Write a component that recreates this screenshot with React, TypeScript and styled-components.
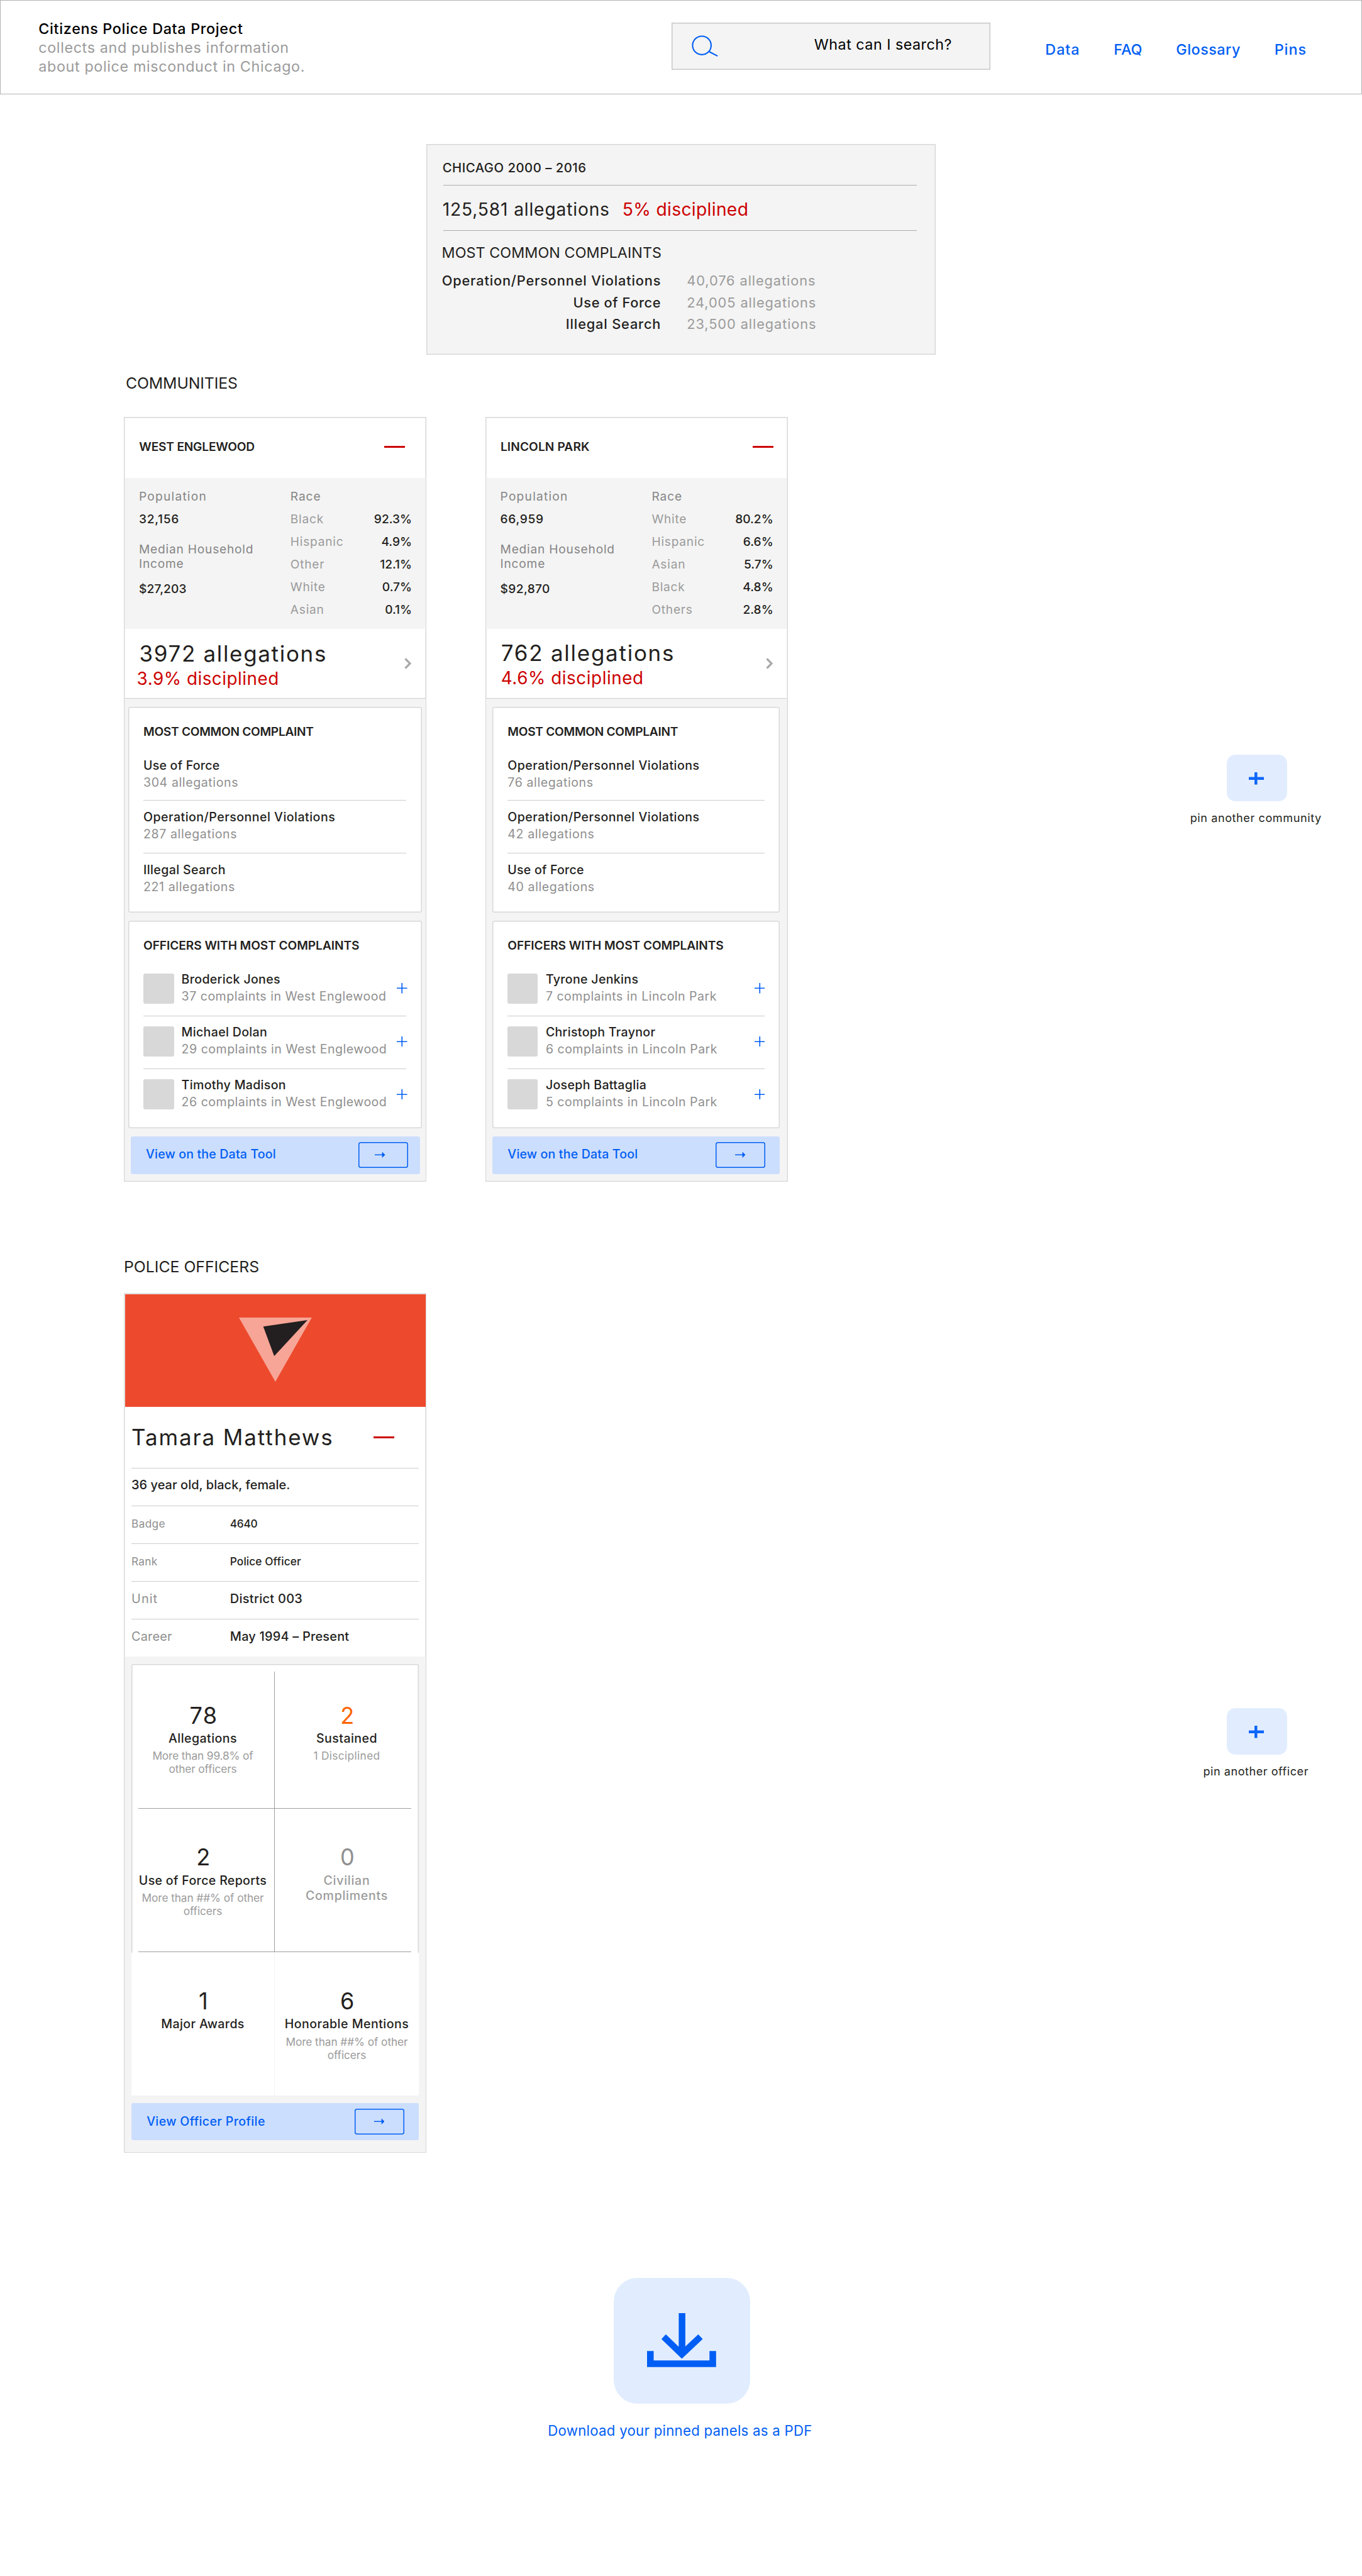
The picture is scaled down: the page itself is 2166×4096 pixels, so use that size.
import React from "react";
import styled, { createGlobalStyle, css } from "styled-components";

/* The layout is specified on a 2880-wide artboard and drawn at this ratio. */
const RATIO = 0.7521;
const u = (n: number) => `${+(n * RATIO).toFixed(3)}px`;

const ink = "#231f20";
const blue = "#005ef4";
const red = "#cc0000";
const grey = "#8f8f8f";
const softGrey = "#9b9b9b";
const line = "#d8d8d8";
const hairline = "#cdcdcd";
const wash = "#f4f4f4";

const GlobalStyle = createGlobalStyle`
  html, body { margin: 0; padding: 0; background: #ffffff; }
  * { box-sizing: border-box; }
  body {
    font-family: Inter, "Liberation Sans", sans-serif;
    color: ${ink};
    -webkit-font-smoothing: antialiased;
  }
`;

type TypeProps = {
  $size: number;
  $lead: number;
  $weight?: number;
  $track?: number;
  $tone?: string;
};

const type = css<TypeProps>`
  font-size: ${(p) => u(p.$size)};
  line-height: ${(p) => u(p.$lead)};
  font-weight: ${(p) => p.$weight ?? 400};
  letter-spacing: ${(p) => u(p.$track ?? 0)};
  color: ${(p) => p.$tone ?? ink};
  white-space: nowrap;
`;

const Text = styled.div<TypeProps>`
  ${type}
`;

/* ---------- page frame ---------- */

const Page = styled.div`
  width: ${u(2880)};
  height: 4096px;
  overflow: hidden;
  display: flex;
  flex-direction: column;
`;

const Header = styled.header`
  flex: none;
  height: ${u(200)};
  display: flex;
  align-items: flex-start;
  box-shadow: inset 0 0 0 1px #b3b3b3;
`;

const Brand = styled.div`
  width: ${u(1420)};
  padding: ${u(40.7)} 0 0 ${u(81.5)};
`;

const Search = styled.div`
  width: ${u(674)};
  height: ${u(100)};
  margin-top: ${u(48)};
  display: flex;
  align-items: center;
  justify-content: space-between;
  padding: 0 ${u(81)} 0 ${u(42)};
  background: ${wash};
  box-shadow: inset 0 0 0 ${u(2)} #c8c8c8;
`;

const SearchText = styled(Text)`
  padding-bottom: ${u(6.6)};
`;

const SearchIcon = styled.svg`
  width: ${u(56)};
  height: ${u(46)};
`;

const Nav = styled.nav`
  display: flex;
  gap: ${u(71.5)};
  margin: ${u(84.7)} 0 0 ${u(116.3)};
`;

const NavLink = styled.a<TypeProps>`
  ${type}
  text-decoration: none;
`;

/* ---------- city summary ---------- */

const Summary = styled.section`
  flex: none;
  align-self: center;
  width: ${u(1076)};
  height: ${u(446)};
  margin-top: ${u(104)};
  padding: ${u(33.2)} ${u(39)} 0 ${u(33.7)};
  background: ${wash};
  box-shadow: inset 0 0 0 ${u(2)} ${line};
`;

const SummaryRule = styled.div<{ $above: number }>`
  height: ${u(2)};
  margin: ${(p) => u(p.$above)} 0 0 ${u(1.3)};
  border-top: 1px solid #adadad;
`;

const SummaryTotals = styled.div`
  display: flex;
  gap: ${u(26.4)};
  margin: ${u(25.4)} 0 0;
`;

const SummaryHeading = styled(Text)`
  margin: ${u(25.7)} 0 0 ${u(-1.6)};
`;

const SummaryGrid = styled.div`
  display: grid;
  grid-template-columns: ${u(463)} auto;
  column-gap: ${u(54.6)};
  margin: ${u(15.7)} 0 0 ${u(-1)};
`;

const SummaryName = styled(Text)`
  justify-self: end;
`;

/* ---------- sections ---------- */

const SectionTitle = styled.h2<TypeProps & { $above: number; $below: number; $left: number }>`
  ${type}
  margin: ${(p) => u(p.$above)} 0 ${(p) => u(p.$below)} ${(p) => u(p.$left)};
`;

const Shelf = styled.section`
  flex: none;
  display: flex;
  align-items: flex-start;
  gap: ${u(124)};
  padding: 0 ${u(84.5)} 0 ${u(262)};
`;

const Card = styled.article<{ $height: number }>`
  flex: none;
  width: ${u(640)};
  height: ${(p) => u(p.$height)};
  padding: ${u(2)};
  display: flex;
  flex-direction: column;
  box-shadow: inset 0 0 0 ${u(2)} ${line};
`;

const PinColumn = styled.div<{ $drop: number }>`
  width: ${u(280)};
  margin: ${(p) => u(p.$drop)} 0 0 auto;
  display: flex;
  flex-direction: column;
  align-items: center;
`;

const PinButton = styled.button`
  width: ${u(128)};
  height: ${u(98)};
  margin-left: ${u(5)};
  padding: ${u(2)} ${u(2)} 0 0;
  border: 0;
  border-radius: ${u(18)};
  background: #e1edfe;
  display: flex;
  align-items: center;
  justify-content: center;
`;

const PinText = styled(Text)`
  margin-top: ${u(20)};
`;

/* ---------- community card ---------- */

const CardHead = styled.div<{ $right: number }>`
  height: ${u(126)};
  padding: 0 ${(p) => u(p.$right - 2)} ${u(5)} ${u(30.3)};
  display: flex;
  align-items: center;
  justify-content: space-between;
`;

const Minus = styled.div`
  width: ${u(44)};
  height: 3px;
  background: ${red};
`;

const Facts = styled.div`
  height: ${u(320)};
  padding: ${u(14.7)} ${u(29)} 0 ${u(29.8)};
  display: flex;
  justify-content: space-between;
  background: ${wash};
`;

const IncomeLabel = styled(Text)`
  margin: ${u(25.3)} 0 ${u(11.7)};
`;

const RaceList = styled.div`
  width: ${u(257)};
`;

const RaceRow = styled.div`
  display: flex;
  justify-content: space-between;
`;

const Totals = styled.div`
  height: ${u(146.7)};
  display: flex;
  align-items: center;
  justify-content: space-between;
  padding: 0 ${u(30)} 0 0;
  border-bottom: 1px solid ${hairline};
`;

const TotalsText = styled.div<{ $top: number; $left: number }>`
  align-self: flex-start;
  padding: ${(p) => u(p.$top)} 0 0 ${(p) => u(p.$left)};
`;

const Rate = styled(Text)<{ $outdent: number }>`
  margin: ${u(3.5)} 0 0 ${(p) => u(-p.$outdent)};
`;

const Chevron = styled.svg`
  width: ${u(15)};
  height: ${u(24)};
`;

const Lower = styled.div<{ $left: number; $right: number }>`
  flex: 1;
  padding: ${u(18)} ${(p) => u(p.$right)} 0 ${(p) => u(p.$left)};
  background: ${wash};
`;

const Panel = styled.div<{ $height: number; $below: number; $top: number }>`
  height: ${(p) => u(p.$height)};
  margin-bottom: ${(p) => u(p.$below)};
  padding: ${(p) => u(p.$top)} ${u(32.5)} 0;
  border-radius: ${u(4)};
  background: #ffffff;
  box-shadow: inset 0 0 0 ${u(2)} ${line};
`;

const ComplaintList = styled.div`
  margin-top: ${u(38.4)};
`;

const Complaint = styled.div`
  height: ${u(111.9)};
  padding-top: ${u(16.4)};
  border-bottom: 1px solid ${hairline};
  &:first-child {
    height: ${u(92.5)};
    padding-top: 0;
  }
  &:last-child {
    border-bottom: 0;
  }
`;

const OfficerList = styled.div`
  margin-top: ${u(22.6)};
`;

const Officer = styled.div`
  height: ${u(112)};
  display: flex;
  align-items: flex-start;
  border-bottom: 1px solid ${hairline};
  &:last-child {
    border-bottom: 0;
  }
`;

const Avatar = styled.div<{ $width: number }>`
  width: ${(p) => u(p.$width)};
  height: ${u(64)};
  margin-top: ${u(21)};
  border-radius: ${u(4)};
  background: ${line};
`;

const OfficerText = styled.div<{ $gap: number }>`
  flex: 1;
  padding: ${u(15.5)} 0 0 ${(p) => u(p.$gap)};
`;

const SmallPlus = styled.svg<{ $overhang: number }>`
  flex: none;
  width: ${u(22)};
  height: ${u(22)};
  margin: ${u(41.8)} ${(p) => u(-p.$overhang)} 0 0;
`;

const LinkBar = styled.a<{ $left: number; $right: number; $pad: number; $height: number; $above: number }>`
  height: ${(p) => u(p.$height)};
  margin: ${(p) => u(p.$above)} ${(p) => u(p.$right)} 0 ${(p) => u(p.$left)};
  padding: 0 ${(p) => u(p.$pad)} 0 ${u(32.5)};
  display: flex;
  align-items: center;
  justify-content: space-between;
  border-radius: ${u(4)};
  background: #ccdefd;
`;

const LinkText = styled(Text)<{ $lift: number }>`
  padding-bottom: ${(p) => u(p.$lift)};
`;

const ArrowBox = styled.span<{ $indent: number }>`
  width: ${u(105)};
  height: ${u(54)};
  padding-left: ${(p) => u(p.$indent)};
  display: flex;
  align-items: center;
  border-radius: ${u(5)};
  box-shadow: inset 0 0 0 ${u(2)} ${blue};
`;

const ArrowIcon = styled.svg`
  width: ${u(22)};
  height: ${u(14)};
`;

/* ---------- officer card ---------- */

const Banner = styled.div`
  height: ${u(238)};
  padding: ${u(50.2)} 0 0 ${u(241)};
  background: #ed4a2d;
`;

const Emblem = styled.svg`
  display: block;
  width: ${u(154)};
  height: ${u(136)};
`;

const OfficerHead = styled.div`
  height: ${u(129)};
  padding: 0 ${u(66)} 0 ${u(14)};
  display: flex;
  align-items: center;
  justify-content: space-between;
`;

const Details = styled.div`
  height: ${u(399)};
  padding: 0 ${u(14)};
`;

const Detail = styled.div<{ $lift: number }>`
  height: ${u(80)};
  padding-bottom: ${(p) => u(p.$lift)};
  display: flex;
  align-items: center;
  border-top: 1px solid ${hairline};
`;

const DetailLabel = styled(Text)`
  width: ${u(208.4)};
`;

const StatArea = styled.div`
  flex: 1;
  padding: ${u(16)} ${u(15)} 0 ${u(13.5)};
  background: ${wash};
`;

const StatFrame = styled.div<{ $bordered: boolean }>`
  background: #ffffff;
  ${(p) =>
    p.$bordered &&
    css`
      height: ${u(610.5)};
      padding-top: ${u(16)};
      border-radius: ${u(4)} ${u(4)} 0 0;
      box-shadow: inset ${u(2)} 0 0 ${line}, inset ${u(-2)} 0 0 ${line}, inset 0 ${u(2)} 0 ${line};
    `}
`;

const StatRow = styled.div<{ $height: number; $rule: string; $top: number }>`
  height: ${(p) => u(p.$height)};
  display: grid;
  grid-template-columns: ${u(304)} 1fr;
  & > :first-child {
    border-right: 1px solid ${(p) => p.$rule};
  }
  & > * {
    padding-top: ${(p) => u(p.$top)};
  }
`;

const StatRule = styled.div`
  height: ${u(2)};
  margin: 0 ${u(15.5)};
  border-top: 1px solid #9e9e9e;
`;

const Stat = styled.div`
  text-align: center;
`;

const StatNumber = styled(Text)`
  padding-left: ${u(4)};
  margin-bottom: ${u(4.7)};
`;

const StatNote = styled(Text)`
  margin-top: ${u(6.8)};
`;

/* ---------- download ---------- */

const Download = styled.section`
  margin-top: ${u(264.6)};
  display: flex;
  flex-direction: column;
  align-items: center;
`;

const DownloadButton = styled.button`
  width: ${u(288)};
  height: ${u(266)};
  margin-left: ${u(4)};
  padding: ${u(75)} 0 0 ${u(70)};
  border: 0;
  border-radius: ${u(50)};
  background: #e1edfe;
  display: flex;
  align-items: flex-start;
`;

const DownloadIcon = styled.svg`
  flex: none;
  width: ${u(146)};
  height: ${u(114)};
`;

const DownloadText = styled(Text)`
  margin: ${u(37.3)} ${u(4)} 0 0;
`;

/* ---------- data ---------- */

type Tracked = [string, number];

type Community = {
  name: Tracked;
  minusRight: number;
  population: Tracked;
  income: Tracked;
  race: [string, string][];
  allegations: Tracked;
  disciplined: Tracked;
  totals: { top: number; left: number; outdent: number };
  lower: { left: number; right: number };
  complaints: [string, string, number][];
  officers: [string, string][];
  officerBox: { avatar: number; gap: number; overhang: number };
  bar: { left: number; right: number; pad: number; indent: number };
};

const communities: Community[] = [
  {
    name: ["WEST ENGLEWOOD", -0.27],
    minusRight: 46,
    population: ["32,156", 0.93],
    income: ["$27,203", 0.2],
    race: [
      ["Black", "92.3%"],
      ["Hispanic", "4.9%"],
      ["Other", "12.1%"],
      ["White", "0.7%"],
      ["Asian", "0.1%"],
    ],
    allegations: ["3972 allegations", 2.24],
    disciplined: ["3.9% disciplined", 0.68],
    totals: { top: 23.8, left: 30.5, outdent: 5.2 },
    lower: { left: 6.7, right: 8.5 },
    complaints: [
      ["Use of Force", "304 allegations", 0.3],
      ["Operation/Personnel Violations", "287 allegations", 0.64],
      ["Illegal Search", "221 allegations", 0.5],
    ],
    officers: [
      ["Broderick Jones", "37 complaints in West Englewood"],
      ["Michael Dolan", "29 complaints in West Englewood"],
      ["Timothy Madison", "26 complaints in West Englewood"],
    ],
    officerBox: { avatar: 65.6, gap: 15, overhang: 2 },
    bar: { left: 5.3, right: 3.5, pad: 25, indent: 35 },
  },
  {
    name: ["LINCOLN PARK", 0.13],
    minusRight: 30,
    population: ["66,959", 0.9],
    income: ["$92,870", 0.5],
    race: [
      ["White", "80.2%"],
      ["Hispanic", "6.6%"],
      ["Asian", "5.7%"],
      ["Black", "4.8%"],
      ["Others", "2.8%"],
    ],
    allegations: ["762 allegations", 2.33],
    disciplined: ["4.6% disciplined", 0.75],
    totals: { top: 22.4, left: 31.5, outdent: 0.2 },
    lower: { left: 13, right: 15 },
    complaints: [
      ["Operation/Personnel Violations", "76 allegations", 0.64],
      ["Operation/Personnel Violations", "42 allegations", 0.64],
      ["Use of Force", "40 allegations", 0.3],
    ],
    officers: [
      ["Tyrone Jenkins", "7 complaints in Lincoln Park"],
      ["Christoph Traynor", "6 complaints in Lincoln Park"],
      ["Joseph Battaglia", "5 complaints in Lincoln Park"],
    ],
    officerBox: { avatar: 64, gap: 16.5, overhang: 0.8 },
    bar: { left: 0, right: 0, pad: 31, indent: 41 },
  },
];

const details: { label: Tracked; value: Tracked; size: number; lift: number }[] = [
  { label: ["Badge", 0.39], value: ["4640", -0.36], size: 23, lift: 4.6 },
  { label: ["Rank", 0.3], value: ["Police Officer", 0.11], size: 23, lift: 4.6 },
  { label: ["Unit", 1.33], value: ["District 003", 0.4], size: 26.5, lift: 6 },
  { label: ["Career", 0.21], value: ["May 1994 – Present", 0.26], size: 26.5, lift: 6 },
];

type StatData = { value: string; label: Tracked; note?: Tracked; tone?: string; muted?: boolean };

const stats: StatData[][] = [
  [
    { value: "78", label: ["Allegations", 0.6], note: ["More than 99.8% of\nother officers", -0.18] },
    { value: "2", label: ["Sustained", 0.6], note: ["1 Disciplined", 0.46], tone: "#ff6500" },
  ],
  [
    { value: "2", label: ["Use of Force Reports", 0.45], note: ["More than ##% of other\nofficers", -0.11] },
    { value: "0", label: ["Civilian\nCompliments", 0.96], tone: grey, muted: true },
  ],
  [
    { value: "1", label: ["Major Awards", 0.5] },
    { value: "6", label: ["Honorable Mentions", 0.63], note: ["More than ##% of other\nofficers", -0.11] },
  ],
];

/* ---------- parts ---------- */

const multiline = (text: string) =>
  text.split("\n").map((part, i) => (
    <React.Fragment key={i}>
      {i > 0 && <br />}
      {part}
    </React.Fragment>
  ));

const Arrow = () => (
  <ArrowIcon viewBox="0 0 22 14">
    <path d="M0 7H16" stroke={blue} strokeWidth="2" />
    <path d="M15.5 0.8L22 7L15.5 13.2Z" fill={blue} />
  </ArrowIcon>
);

const PinAnother = ({ label, track, drop }: { label: string; track: number; drop: number }) => (
  <PinColumn $drop={drop}>
    <PinButton aria-label={label}>
      <svg width={32 * RATIO} height={26 * RATIO} viewBox="0 0 32 26">
        <path d="M12 0H18V10H32V16H18V26H12V16H0V10H12Z" fill="#0e67f8" />
      </svg>
    </PinButton>
    <PinText $size={24} $lead={32} $track={track}>
      {label}
    </PinText>
  </PinColumn>
);

const CommunityCard = ({ c }: { c: Community }) => (
  <Card $height={1616}>
    <CardHead $right={c.minusRight}>
      <Text $size={25.5} $lead={32} $weight={600} $track={c.name[1]}>
        {c.name[0]}
      </Text>
      <Minus />
    </CardHead>
    <Facts>
      <div>
        <Text $size={25.5} $lead={48} $track={1.63} $tone="#858585">
          Population
        </Text>
        <Text $size={25.5} $lead={48} $weight={500} $track={c.population[1]}>
          {c.population[0]}
        </Text>
        <IncomeLabel $size={25.5} $lead={31.5} $track={1.04} $tone="#858585">
          Median Household
          <br />
          Income
        </IncomeLabel>
        <Text $size={25.5} $lead={48} $weight={500} $track={c.income[1]}>
          {c.income[0]}
        </Text>
      </div>
      <RaceList>
        <Text $size={25.5} $lead={48} $track={1.21} $tone="#858585">
          Race
        </Text>
        {c.race.map(([label, share]) => (
          <RaceRow key={label}>
            <Text $size={25.5} $lead={48} $track={1} $tone={softGrey}>
              {label}
            </Text>
            <Text $size={25.5} $lead={48} $weight={500}>
              {share}
            </Text>
          </RaceRow>
        ))}
      </RaceList>
    </Facts>
    <Totals>
      <TotalsText $top={c.totals.top} $left={c.totals.left}>
        <Text $size={46.5} $lead={56} $track={c.allegations[1]}>
          {c.allegations[0]}
        </Text>
        <Rate $size={37} $lead={44} $track={c.disciplined[1]} $tone={red} $outdent={c.totals.outdent}>
          {c.disciplined[0]}
        </Rate>
      </TotalsText>
      <Chevron viewBox="0 0 15 24">
        <path d="M2 1.8L12 12L2 22.2" fill="none" stroke="#a9a9a9" strokeWidth="4.4" />
      </Chevron>
    </Totals>
    <Lower $left={c.lower.left} $right={c.lower.right}>
      <Panel $height={434.6} $below={16.8} $top={35.6}>
        <Text $size={25.5} $lead={32} $weight={600} $track={-0.38}>
          MOST COMMON COMPLAINT
        </Text>
        <ComplaintList>
          {c.complaints.map(([name, count, track], i) => (
            <Complaint key={i}>
              <Text $size={26} $lead={36} $weight={500} $track={track}>
                {name}
              </Text>
              <Text $size={26} $lead={36} $track={0.8} $tone={grey}>
                {count}
              </Text>
            </Complaint>
          ))}
        </ComplaintList>
      </Panel>
      <Panel $height={439.4} $below={16.6} $top={36.4}>
        <Text $size={25.5} $lead={32} $weight={600} $track={-0.1}>
          OFFICERS WITH MOST COMPLAINTS
        </Text>
        <OfficerList>
          {c.officers.map(([name, count]) => (
            <Officer key={name}>
              <Avatar $width={c.officerBox.avatar} />
              <OfficerText $gap={c.officerBox.gap}>
                <Text $size={26} $lead={36} $weight={500} $track={0.43}>
                  {name}
                </Text>
                <Text $size={26} $lead={35} $track={0.66} $tone={grey}>
                  {count}
                </Text>
              </OfficerText>
              <SmallPlus viewBox="0 0 22 22" $overhang={c.officerBox.overhang}>
                <path d="M0 11H22M11 0V22" stroke={blue} strokeWidth="2.2" />
              </SmallPlus>
            </Officer>
          ))}
        </OfficerList>
      </Panel>
      <LinkBar $left={c.bar.left} $right={c.bar.right} $pad={c.bar.pad} $height={80} $above={0}>
        <LinkText $size={26} $lead={36} $weight={500} $track={0.23} $tone={blue} $lift={3.2}>
          View on the Data Tool
        </LinkText>
        <ArrowBox $indent={c.bar.indent}>
          <Arrow />
        </ArrowBox>
      </LinkBar>
    </Lower>
  </Card>
);

const StatCell = ({ s }: { s: StatData }) => (
  <Stat>
    <StatNumber $size={48} $lead={56} $track={1.8} $tone={s.tone}>
      {s.value}
    </StatNumber>
    <Text $size={26} $lead={32} $weight={500} $track={s.label[1]} $tone={s.muted ? softGrey : ink}>
      {multiline(s.label[0])}
    </Text>
    {s.note && (
      <StatNote $size={23} $lead={28} $track={s.note[1]} $tone={softGrey}>
        {multiline(s.note[0])}
      </StatNote>
    )}
  </Stat>
);

const OfficerCard = () => (
  <Card $height={1817.4}>
    <Banner>
      <Emblem viewBox="0 0 154 136">
        <polygon points="0,0 154,0 77,135.5" fill="#f7a597" />
        <polygon points="51.4,18.9 145,5.2 74.6,81.5" fill={ink} />
      </Emblem>
    </Banner>
    <OfficerHead>
      <Text $size={46.5} $lead={56} $track={2.51}>
        Tamara Matthews
      </Text>
      <Minus />
    </OfficerHead>
    <Details>
      <Detail $lift={6}>
        <Text $size={26.5} $lead={36} $weight={500} $track={0.06}>
          36 year old, black, female.
        </Text>
      </Detail>
      {details.map((d) => (
        <Detail key={d.label[0]} $lift={d.lift}>
          <DetailLabel $size={d.size} $lead={36} $track={d.label[1]} $tone={grey}>
            {d.label[0]}
          </DetailLabel>
          <Text $size={d.size} $lead={36} $weight={500} $track={d.value[1]}>
            {d.value[0]}
          </Text>
        </Detail>
      ))}
    </Details>
    <StatArea>
      <StatFrame $bordered>
        <StatRow $height={288.5} $rule="#9e9e9e" $top={64.8}>
          {stats[0].map((s) => (
            <StatCell key={s.label[0]} s={s} />
          ))}
        </StatRow>
        <StatRule />
        <StatRow $height={302} $rule="#9e9e9e" $top={73.9}>
          {stats[1].map((s) => (
            <StatCell key={s.label[0]} s={s} />
          ))}
        </StatRow>
        <StatRule />
      </StatFrame>
      <StatFrame $bordered={false}>
        <StatRow $height={301.5} $rule={wash} $top={74.3}>
          {stats[2].map((s) => (
            <StatCell key={s.label[0]} s={s} />
          ))}
        </StatRow>
      </StatFrame>
      <LinkBar $left={0} $right={0} $pad={30.5} $height={79} $above={16}>
        <LinkText $size={26} $lead={36} $weight={500} $track={0.49} $tone={blue} $lift={0}>
          View Officer Profile
        </LinkText>
        <ArrowBox $indent={41}>
          <Arrow />
        </ArrowBox>
      </LinkBar>
    </StatArea>
  </Card>
);

export default function App() {
  return (
    <>
      <GlobalStyle />
      <Page>
        <Header>
          <Brand>
            <Text $size={31} $lead={40} $weight={500} $track={0.92} $tone="#000000">
              Citizens Police Data Project
            </Text>
            <Text $size={31} $lead={40} $track={0.86} $tone={softGrey}>
              collects and publishes information
              <br />
              about police misconduct in Chicago.
            </Text>
          </Brand>
          <Search>
            <SearchIcon viewBox="0 0 56 46">
              <circle cx="21.5" cy="21.5" r="19.6" fill="none" stroke={blue} strokeWidth="2.8" />
              <path d="M36.5 34.5L54.8 44" stroke={blue} strokeWidth="2.8" />
            </SearchIcon>
            <SearchText $size={31} $lead={40} $track={0.65} $tone="#000000">
              What can I search?
            </SearchText>
          </Search>
          <Nav>
            <NavLink $size={31} $lead={40} $weight={500} $track={1.3} $tone={blue}>
              Data
            </NavLink>
            <NavLink $size={31} $lead={40} $weight={500} $tone={blue}>
              FAQ
            </NavLink>
            <NavLink $size={31} $lead={40} $weight={500} $track={0.69} $tone={blue}>
              Glossary
            </NavLink>
            <NavLink $size={31} $lead={40} $weight={500} $track={1.29} $tone={blue}>
              Pins
            </NavLink>
          </Nav>
        </Header>

        <Summary>
          <Text $size={27} $lead={34} $weight={500} $track={0.66}>
            CHICAGO 2000 – 2016
          </Text>
          <SummaryRule $above={19.8} />
          <SummaryTotals>
            <Text $size={37.5} $lead={48} $track={1.11}>
              125,581 allegations
            </Text>
            <Text $size={37.5} $lead={48} $track={0.44} $tone={red}>
              5% disciplined
            </Text>
          </SummaryTotals>
          <SummaryRule $above={20.6} />
          <SummaryHeading $size={31} $lead={40} $track={0.09}>
            MOST COMMON COMPLAINTS
          </SummaryHeading>
          <SummaryGrid>
            <SummaryName $size={29} $lead={46} $weight={500} $track={1.08}>
              Operation/Personnel Violations
            </SummaryName>
            <Text $size={29} $lead={46} $track={1.19} $tone={softGrey}>
              40,076 allegations
            </Text>
            <SummaryName $size={29} $lead={46} $weight={500} $track={0.8}>
              Use of Force
            </SummaryName>
            <Text $size={29} $lead={46} $track={1.19} $tone={softGrey}>
              24,005 allegations
            </Text>
            <SummaryName $size={29} $lead={46} $weight={500} $track={1.07}>
              Illegal Search
            </SummaryName>
            <Text $size={29} $lead={46} $track={1.19} $tone={softGrey}>
              23,500 allegations
            </Text>
          </SummaryGrid>
        </Summary>

        <SectionTitle $size={33} $lead={40} $track={-0.18} $above={40} $below={52} $left={266}>
          COMMUNITIES
        </SectionTitle>
        <Shelf>
          {communities.map((c) => (
            <CommunityCard key={c.name[0]} c={c} />
          ))}
          <PinAnother label="pin another community" track={0.8} drop={714} />
        </Shelf>

        <SectionTitle $size={33} $lead={40} $track={-0.02} $above={160} $below={36} $left={262}>
          POLICE OFFICERS
        </SectionTitle>
        <Shelf>
          <OfficerCard />
          <PinAnother label="pin another officer" track={0.74} drop={878} />
        </Shelf>

        <Download>
          <DownloadButton aria-label="Download your pinned panels as a PDF">
            <DownloadIcon viewBox="0 0 146 114">
              <path
                d="M67 0H81V70.5L108.3 45L117.7 55L73.6 96.3L30.4 55L39.8 45L67 71Z"
                fill={blue}
              />
              <path d="M0 80H14V100H132V80H146V114H0Z" fill={blue} />
            </DownloadIcon>
          </DownloadButton>
          <DownloadText $size={29.5} $lead={40} $track={0.38} $tone={blue}>
            Download your pinned panels as a PDF
          </DownloadText>
        </Download>
      </Page>
    </>
  );
}
